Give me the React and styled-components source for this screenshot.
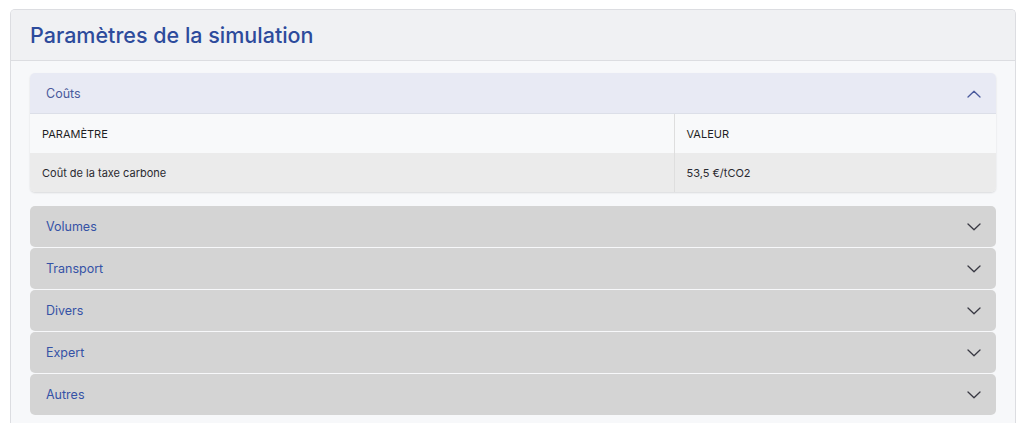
import React, { useState } from "react"
import styled, { createGlobalStyle } from "styled-components"

const GlobalStyle = createGlobalStyle`
  body {
    margin: 0;
    background: #ffffff;
    font-family: Inter, "Liberation Sans", sans-serif;
  }
`

const sections = [
  {
    key: "couts",
    label: "Coûts",
    rows: [{ param: "Coût de la taxe carbone", value: "53,5 €/tCO2" }],
  },
  { key: "volumes", label: "Volumes", rows: [] },
  { key: "transport", label: "Transport", rows: [] },
  { key: "divers", label: "Divers", rows: [] },
  { key: "expert", label: "Expert", rows: [] },
  { key: "autres", label: "Autres", rows: [] },
]

const Chevron = ({ up, color }) => (
  <svg width="14" height="8" viewBox="0 0 14 8" fill="none">
    <path
      d={up ? "M1 7L7 1.2L13 7" : "M1 1L7 6.8L13 1"}
      stroke={color}
      strokeWidth="1.3"
      strokeLinecap="round"
      strokeLinejoin="round"
    />
  </svg>
)

const App = () => {
  const [open, setOpen] = useState("couts")

  return (
    <Page>
      <GlobalStyle />
      <Card>
        <CardHeader>
          <Title>Paramètres de la simulation</Title>
        </CardHeader>
        <CardBody>
          {sections.map((s) => {
            const isOpen = open === s.key
            return (
              <Section key={s.key} open={isOpen}>
                <SectionHeader
                  open={isOpen}
                  onClick={() => setOpen(isOpen ? null : s.key)}
                >
                  <span>{s.label}</span>
                  <Chevron up={isOpen} color={isOpen ? "#4a5a9c" : "#3a3a44"} />
                </SectionHeader>
                {isOpen && (
                  <Table>
                    <colgroup>
                      <col style={{ width: 644 }} />
                      <col />
                    </colgroup>
                    <thead>
                      <tr>
                        <Th>Paramètre</Th>
                        <Th>Valeur</Th>
                      </tr>
                    </thead>
                    <tbody>
                      {s.rows.map((r) => (
                        <tr key={r.param}>
                          <Td>{r.param}</Td>
                          <Td>{r.value}</Td>
                        </tr>
                      ))}
                    </tbody>
                  </Table>
                )}
              </Section>
            )
          })}
        </CardBody>
      </Card>
    </Page>
  )
}
export default App

const Page = styled.div`
  padding: 9px 8px 0 10px;
`

const Card = styled.div`
  border: 1px solid #dcdde1;
  border-bottom: none;
  border-radius: 5px 5px 0 0;
  overflow: hidden;
  background: #f7f8fa;
`

const CardHeader = styled.div`
  background: #f0f1f3;
  border-bottom: 1px solid #dcdde1;
  height: 50px;
  display: flex;
  align-items: center;
  padding: 0 19px;
`

const Title = styled.h1`
  margin: 0;
  font-size: 21.5px;
  font-weight: 500;
  color: #2d4b9c;
`

const CardBody = styled.div`
  padding: 12px 19px 8px 19px;
  display: flex;
  flex-direction: column;
  gap: 1px;
`

const Section = styled.div`
  border-radius: 5px;
  overflow: hidden;
  margin-bottom: ${(p) => (p.open ? "13px" : "0")};
  box-shadow: ${(p) => (p.open ? "0 1px 2px rgba(0,0,0,0.12)" : "none")};
`

const SectionHeader = styled.div`
  height: 41px;
  display: flex;
  align-items: center;
  justify-content: space-between;
  padding: 0 15px 0 16px;
  background: ${(p) => (p.open ? "#e8eaf4" : "#d4d4d4")};
  color: ${(p) => (p.open ? "#4a5a9c" : "#3552a6")};
  font-size: 12.5px;
  cursor: pointer;
  box-shadow: ${(p) => (p.open ? "inset 0 -1px 0 #dcdfe8" : "none")};
`

const Table = styled.table`
  width: 100%;
  table-layout: fixed;
  border-collapse: collapse;
  font-size: 11px;
  color: #222;

  tr > *:first-child {
    border-right: 1px solid #dedede;
  }
`

const Th = styled.th`
  text-align: left;
  text-transform: uppercase;
  font-weight: 400;
  font-size: 11px;
  height: 39px;
  padding: 0 12px;
  background: #f8f9fa;
  color: #1f1f24;
`

const Td = styled.td`
  height: 39px;
  padding: 0 12px;
  background: #ebebeb;
  color: #2a2a30;
`
